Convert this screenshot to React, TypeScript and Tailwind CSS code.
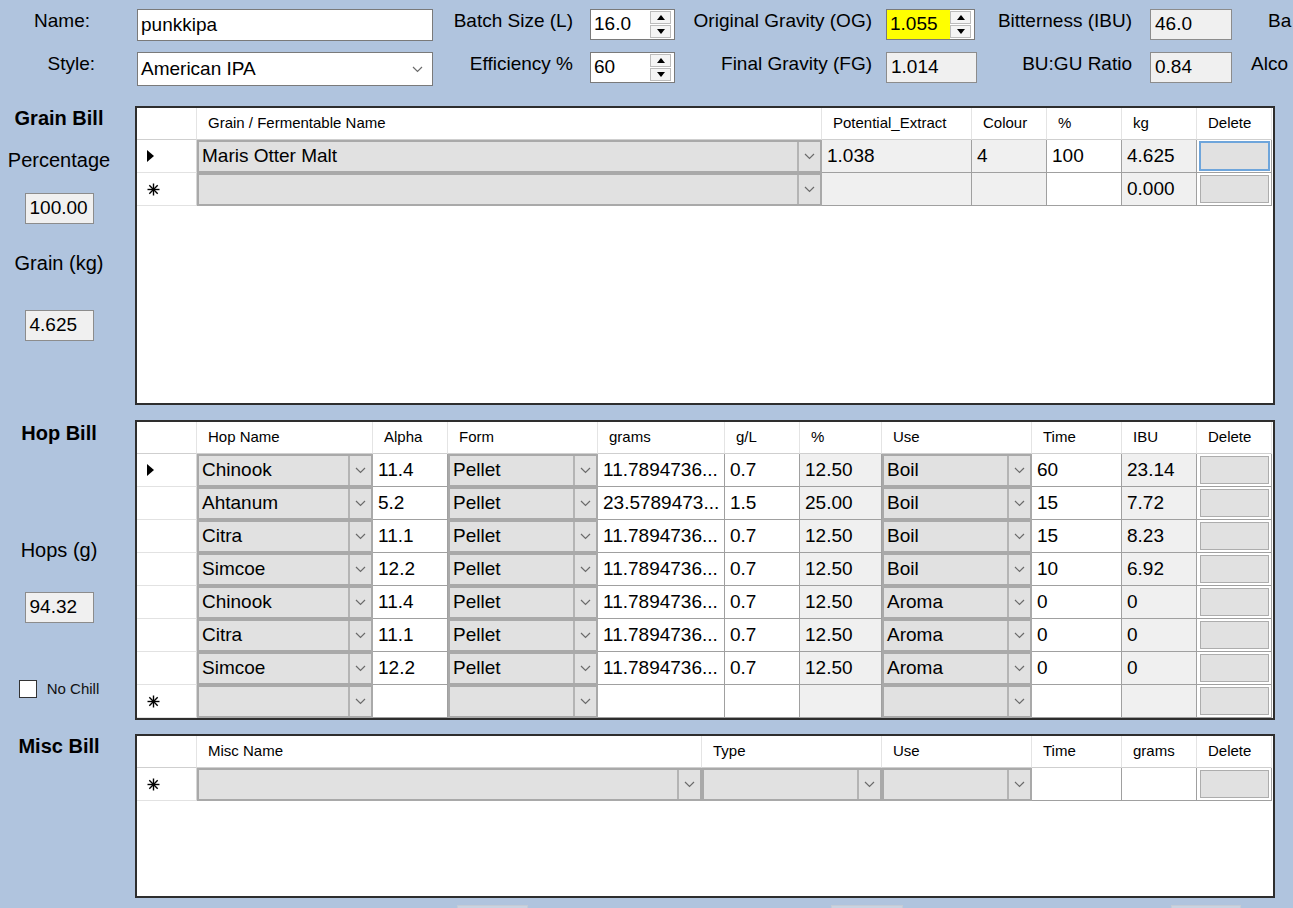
import React from "react";

const Chevron = () => (
  <svg width="11" height="7" viewBox="0 0 11 7">
    <path d="M1 1 L5.5 5.5 L10 1" fill="none" stroke="#6b6b6b" strokeWidth="1.2" />
  </svg>
);

const UpTri = () => (
  <svg width="8" height="5" viewBox="0 0 8 5">
    <path d="M0 5 L4 0 L8 5Z" fill="#000" />
  </svg>
);
const DownTri = () => (
  <svg width="8" height="5" viewBox="0 0 8 5">
    <path d="M0 0 L4 5 L8 0Z" fill="#000" />
  </svg>
);

const SpinBtns = () => (
  <div className="flex flex-col w-[21px] gap-[1px] py-[1px] mr-[3px]">
    <div className="flex-1 border border-[#bcbcbc] bg-[#f4f4f4] flex items-center justify-center">
      <UpTri />
    </div>
    <div className="flex-1 border border-[#bcbcbc] bg-[#f4f4f4] flex items-center justify-center">
      <DownTri />
    </div>
  </div>
);

const Label = ({ children, cls }: { children: React.ReactNode; cls: string }) => (
  <div className={"text-[19px] leading-[24px] text-black whitespace-nowrap shrink-0 " + cls}>{children}</div>
);

const CurGlyph = () => (
  <svg width="8" height="12" viewBox="0 0 8 12">
    <path d="M0 0 L7 6 L0 12Z" fill="#000" />
  </svg>
);
const NewGlyph = () => (
  <svg width="13" height="13" viewBox="0 0 13 13">
    <g stroke="#000" strokeWidth="1.4">
      <line x1="6.5" y1="0.5" x2="6.5" y2="12.5" />
      <line x1="0.5" y1="6.5" x2="12.5" y2="6.5" />
      <line x1="2.3" y1="2.3" x2="10.7" y2="10.7" />
      <line x1="10.7" y1="2.3" x2="2.3" y2="10.7" />
    </g>
  </svg>
);

type CellT =
  | { k: "cur" }
  | { k: "new" }
  | { k: "blank" }
  | { k: "combo"; v: string }
  | { k: "txt"; v: string }
  | { k: "ro"; v: string }
  | { k: "del" }
  | { k: "delf" };

const Cell = ({ c }: { c: CellT }) => {
  switch (c.k) {
    case "cur":
    case "new":
    case "blank":
      return (
        <div className="h-[33px] border-b border-r border-b-[#e2e2e2] border-r-[#d6d6d6] bg-white flex items-center pl-[10px]">
          {c.k === "cur" ? <CurGlyph /> : c.k === "new" ? <NewGlyph /> : null}
        </div>
      );
    case "combo":
      return (
        <div className="h-[33px] border-2 border-[#a9a9a9] bg-[#e1e1e1] flex min-w-0">
          <div className="flex-1 min-w-0 pl-[3px] flex items-center text-[19px] text-black whitespace-nowrap overflow-hidden">
            {c.v}
          </div>
          <div className="w-[23px] border-l-2 border-[#b4b4b4] flex items-center justify-center">
            <Chevron />
          </div>
        </div>
      );
    case "txt":
      return (
        <div className="h-[33px] border-r border-b border-[#a0a0a0] bg-white flex items-center pl-[5px] text-[19px] text-black whitespace-nowrap overflow-hidden">
          {c.v}
        </div>
      );
    case "ro":
      return (
        <div className="h-[33px] border-r border-b border-[#a0a0a0] bg-[#f0f0f0] flex items-center pl-[5px] text-[19px] text-black whitespace-nowrap overflow-hidden">
          {c.v}
        </div>
      );
    case "del":
      return (
        <div className="h-[33px] border-r border-b border-[#a0a0a0] bg-white p-[2px] pl-[3px]">
          <div className="h-full border border-[#adadad] bg-[#e1e1e1]" />
        </div>
      );
    case "delf":
      return (
        <div className="h-[33px] border-r border-b border-[#a0a0a0] bg-white p-[1px] pl-[2px]">
          <div className="h-full border-2 border-[#6ea5db] bg-[#e1e1e1]" />
        </div>
      );
  }
};

const Header = ({ labels }: { labels: string[] }) => (
  <>
    {labels.map((l, i) => (
      <div
        key={i}
        className="h-[32px] border-r border-b border-r-[#e4e4e4] border-b-[#cfcfcf] bg-white flex items-center pl-[11px] text-[15px] text-black whitespace-nowrap overflow-hidden"
      >
        {l}
      </div>
    ))}
  </>
);

const ROBox = ({ v, cls }: { v: string; cls: string }) => (
  <div
    className={
      "border border-[#8c8c8c] bg-[#f0f0f0] flex items-center pl-[4px] text-[19px] text-black shrink-0 " + cls
    }
  >
    {v}
  </div>
);

const grainRows: CellT[][] = [
  [
    { k: "cur" },
    { k: "combo", v: "Maris Otter Malt" },
    { k: "ro", v: "1.038" },
    { k: "ro", v: "4" },
    { k: "txt", v: "100" },
    { k: "ro", v: "4.625" },
    { k: "delf" },
  ],
  [
    { k: "new" },
    { k: "combo", v: "" },
    { k: "ro", v: "" },
    { k: "ro", v: "" },
    { k: "txt", v: "" },
    { k: "ro", v: "0.000" },
    { k: "del" },
  ],
];

const hops: [string, string, string, string, string, string, string, string][] = [
  ["Chinook", "11.4", "11.7894736...", "0.7", "12.50", "Boil", "60", "23.14"],
  ["Ahtanum", "5.2", "23.5789473...", "1.5", "25.00", "Boil", "15", "7.72"],
  ["Citra", "11.1", "11.7894736...", "0.7", "12.50", "Boil", "15", "8.23"],
  ["Simcoe", "12.2", "11.7894736...", "0.7", "12.50", "Boil", "10", "6.92"],
  ["Chinook", "11.4", "11.7894736...", "0.7", "12.50", "Aroma", "0", "0"],
  ["Citra", "11.1", "11.7894736...", "0.7", "12.50", "Aroma", "0", "0"],
  ["Simcoe", "12.2", "11.7894736...", "0.7", "12.50", "Aroma", "0", "0"],
];

const hopRows: CellT[][] = [
  ...hops.map((h, i) => [
    { k: i === 0 ? "cur" : "blank" } as CellT,
    { k: "combo", v: h[0] } as CellT,
    { k: "txt", v: h[1] } as CellT,
    { k: "combo", v: "Pellet" } as CellT,
    { k: "txt", v: h[2] } as CellT,
    { k: "txt", v: h[3] } as CellT,
    { k: "ro", v: h[4] } as CellT,
    { k: "combo", v: h[5] } as CellT,
    { k: "txt", v: h[6] } as CellT,
    { k: "ro", v: h[7] } as CellT,
    { k: "del" } as CellT,
  ]),
  [
    { k: "new" },
    { k: "combo", v: "" },
    { k: "txt", v: "" },
    { k: "combo", v: "" },
    { k: "txt", v: "" },
    { k: "txt", v: "" },
    { k: "ro", v: "" },
    { k: "combo", v: "" },
    { k: "txt", v: "" },
    { k: "ro", v: "" },
    { k: "del" },
  ],
];

const miscRows: CellT[][] = [
  [
    { k: "new" },
    { k: "combo", v: "" },
    { k: "combo", v: "" },
    { k: "combo", v: "" },
    { k: "txt", v: "" },
    { k: "txt", v: "" },
    { k: "del" },
  ],
];

export default function App() {
  return (
    <div className="w-[1293px] h-[908px] overflow-hidden bg-[#b0c4de] font-['Liberation_Sans',Arial,sans-serif] text-black">
      {/* Top form */}
      <div className="pt-[9px]">
        <div className="flex h-[32px]">
          <Label cls="w-[137px] text-right pr-[47px]">Name:</Label>
          <div className="w-[296px] h-[32px] border border-[#7a7a7a] bg-white flex items-center pl-[3px] text-[19px] shrink-0">
            punkkipa
          </div>
          <Label cls="w-[157px] text-right pr-[17px]">Batch Size (L)</Label>
          <div className="w-[85px] h-[31px] border border-[#7a7a7a] bg-white flex shrink-0">
            <div className="flex-1 flex items-center pl-[3px] text-[19px]">16.0</div>
            <SpinBtns />
          </div>
          <Label cls="w-[211px] text-right pr-[14px]">Original Gravity (OG)</Label>
          <div className="w-[89px] h-[31px] border border-[#7a7a7a] bg-white flex shrink-0">
            <div className="w-[63px] bg-[#ffff00] flex items-center pl-[3px] text-[19px]">1.055</div>
            <div className="flex-1" />
            <SpinBtns />
          </div>
          <Label cls="w-[175px] text-right pr-[18px]">Bitterness (IBU)</Label>
          <ROBox v="46.0" cls="w-[82px] h-[31px]" />
          <Label cls="pl-[36px]">Ba</Label>
        </div>
        <div className="flex h-[34px] mt-[11px]">
          <Label cls="w-[137px] text-right pr-[42px] pt-[0px]">Style:</Label>
          <div className="w-[296px] h-[34px] border border-[#7a7a7a] bg-white flex items-center shrink-0">
            <div className="flex-1 pl-[3px] text-[19px]">American IPA</div>
            <div className="w-[26px] flex items-center justify-center pr-[4px]">
              <Chevron />
            </div>
          </div>
          <Label cls="w-[157px] text-right pr-[17px]">Efficiency %</Label>
          <div className="w-[85px] h-[31px] border border-[#7a7a7a] bg-white flex shrink-0">
            <div className="flex-1 flex items-center pl-[3px] text-[19px]">60</div>
            <SpinBtns />
          </div>
          <Label cls="w-[211px] text-right pr-[14px]">Final Gravity (FG)</Label>
          <ROBox v="1.014" cls="w-[91px] h-[31px]" />
          <Label cls="w-[173px] text-right pr-[18px]">BU:GU Ratio</Label>
          <ROBox v="0.84" cls="w-[82px] h-[31px]" />
          <Label cls="pl-[19px]">Alco</Label>
        </div>
      </div>

      {/* Grain Bill */}
      <div className="flex mt-[20px]">
        <div className="w-[135px] shrink-0">
          <div className="w-[118px] flex flex-col items-center">
            <div className="text-[20px] leading-[24px] font-bold">Grain Bill</div>
            <div className="text-[20px] leading-[24px] mt-[18px]">Percentage</div>
            <ROBox v="100.00" cls="w-[69px] h-[31px] mt-[21px]" />
            <div className="text-[20px] leading-[24px] mt-[27px]">Grain (kg)</div>
            <ROBox v="4.625" cls="w-[69px] h-[31px] mt-[35px]" />
          </div>
        </div>
        <div className="w-[1140px] h-[299px] border-2 border-[#2e2e2e] bg-white overflow-hidden shrink-0">
          <div className="grid grid-cols-[60px_625px_150px_75px_75px_75px_75px]">
            <Header labels={["", "Grain / Fermentable Name", "Potential_Extract", "Colour", "%", "kg", "Delete"]} />
            {grainRows.map((r, i) => r.map((c, j) => <Cell key={i + "-" + j} c={c} />))}
          </div>
        </div>
      </div>

      {/* Hop Bill */}
      <div className="flex mt-[15px]">
        <div className="w-[135px] shrink-0">
          <div className="w-[118px] flex flex-col items-center">
            <div className="text-[20px] leading-[24px] font-bold mt-[1px]">Hop Bill</div>
            <div className="text-[20px] leading-[24px] mt-[93px]">Hops (g)</div>
            <ROBox v="94.32" cls="w-[69px] h-[31px] mt-[30px]" />
            <div className="flex items-center mt-[57px] h-[18px]">
              <div className="w-[18px] h-[18px] border border-[#333333] bg-white" />
              <div className="text-[15px] leading-[18px] ml-[10px] text-[#111111]">No Chill</div>
            </div>
          </div>
        </div>
        <div className="w-[1140px] h-[300px] border-2 border-[#2e2e2e] bg-white overflow-hidden shrink-0">
          <div className="grid grid-cols-[60px_176px_75px_150px_127px_75px_82px_150px_90px_75px_75px]">
            <Header
              labels={["", "Hop Name", "Alpha", "Form", "grams", "g/L", "%", "Use", "Time", "IBU", "Delete"]}
            />
            {hopRows.map((r, i) => r.map((c, j) => <Cell key={i + "-" + j} c={c} />))}
          </div>
        </div>
      </div>

      {/* Misc Bill */}
      <div className="flex mt-[14px]">
        <div className="w-[135px] shrink-0">
          <div className="w-[118px] flex flex-col items-center">
            <div className="text-[20px] leading-[24px] font-bold">Misc Bill</div>
          </div>
        </div>
        <div className="w-[1140px] h-[164px] border-2 border-[#2e2e2e] bg-white overflow-hidden shrink-0">
          <div className="grid grid-cols-[60px_505px_180px_150px_90px_75px_75px]">
            <Header labels={["", "Misc Name", "Type", "Use", "Time", "grams", "Delete"]} />
            {miscRows.map((r, i) => r.map((c, j) => <Cell key={i + "-" + j} c={c} />))}
          </div>
        </div>
      </div>

      {/* Bottom buttons (partially visible) */}
      <div className="flex mt-[7px]">
        <div className="ml-[457px] w-[71px] h-[24px] border border-[#c4cbd6] bg-[#c9d3e1]" />
        <div className="ml-[303px] w-[72px] h-[24px] border border-[#c4cbd6] bg-[#c9d3e1]" />
        <div className="ml-[268px] w-[70px] h-[24px] border border-[#c4cbd6] bg-[#c9d3e1]" />
      </div>
    </div>
  );
}
